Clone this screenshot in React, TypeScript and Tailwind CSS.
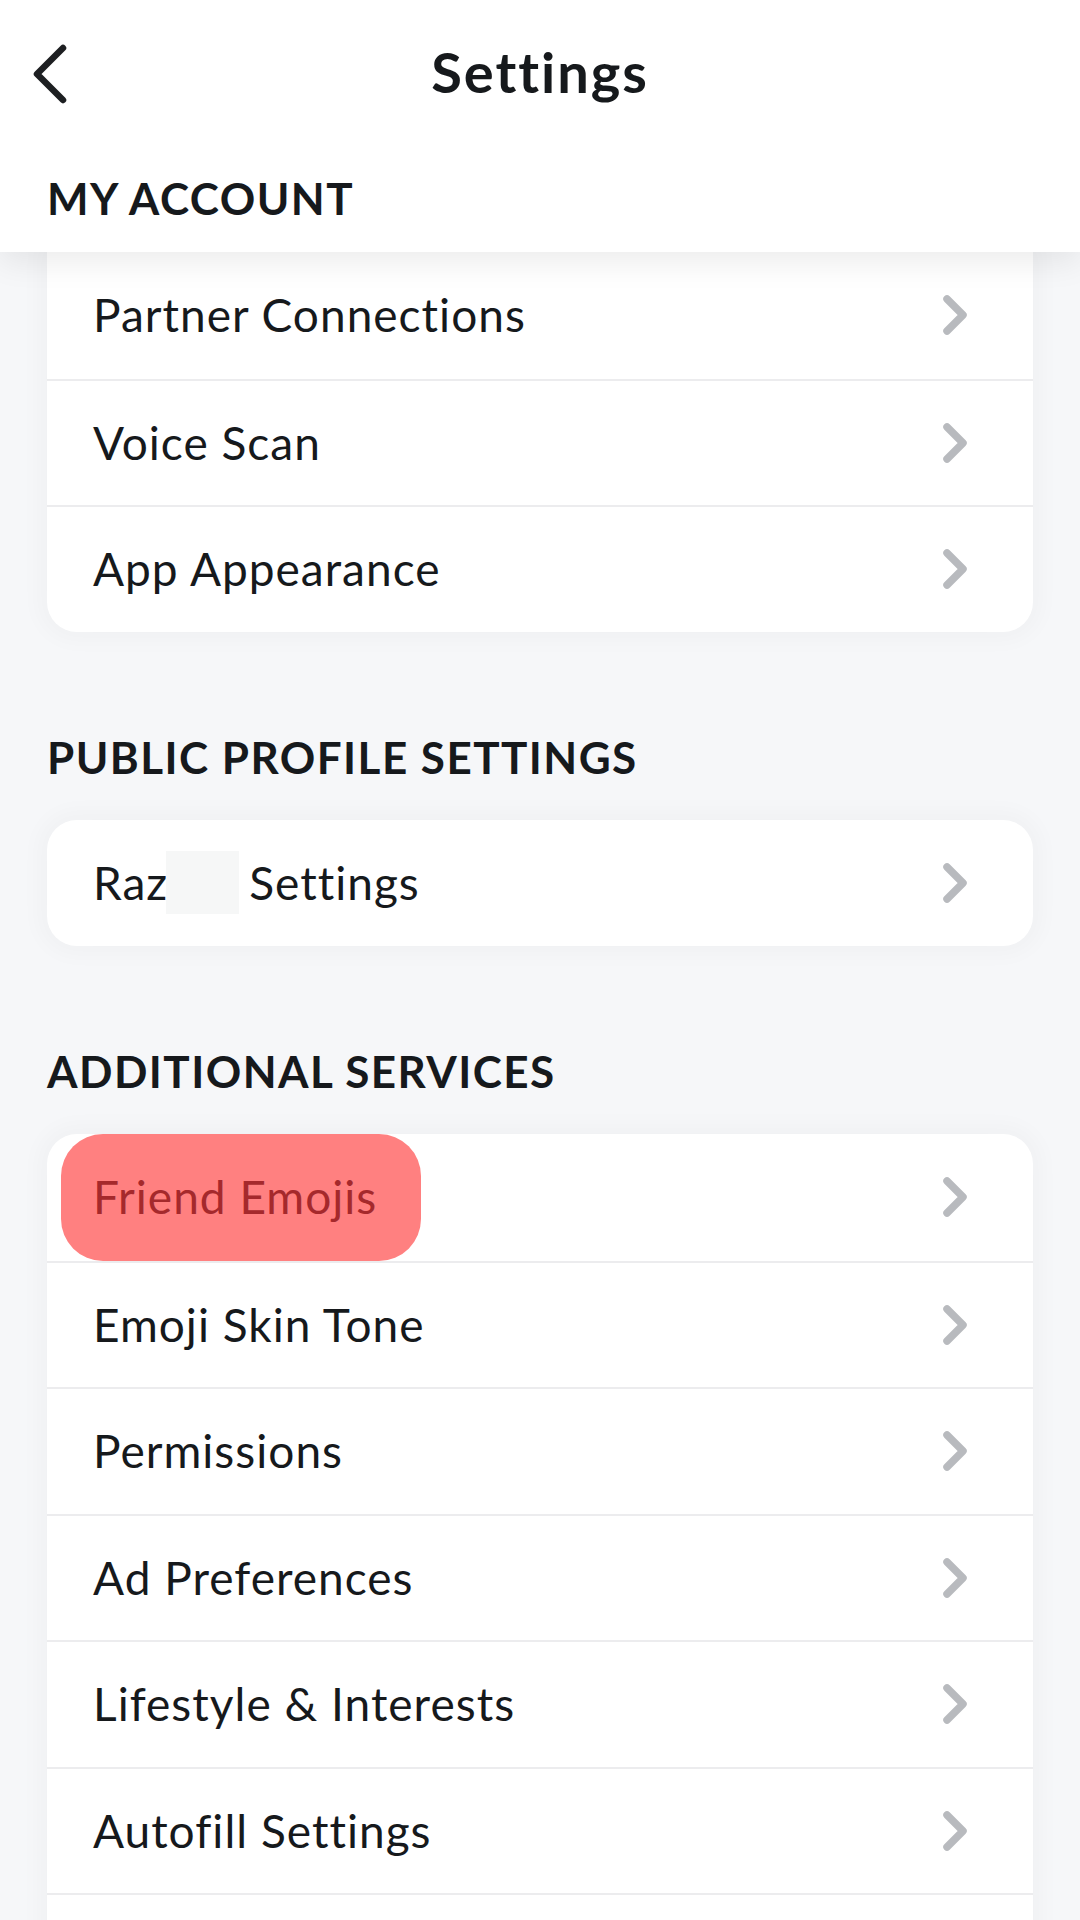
import React from 'react'

const Chevron = () => (
  <svg width="28" height="44" viewBox="0 0 28 44" className="shrink-0">
    <path d="M6 6 L22 22 L6 38" fill="none" stroke="#b8babe" strokeWidth="7.5" strokeLinecap="round" strokeLinejoin="round" />
  </svg>
)

const BackIcon = () => (
  <svg width="40" height="64" viewBox="0 0 40 64">
    <path d="M33 6 L7 32 L33 58" fill="none" stroke="#1d1f22" strokeWidth="6.5" strokeLinecap="round" strokeLinejoin="round" />
  </svg>
)

interface RowProps {
  label?: React.ReactNode
  first?: boolean
  highlight?: boolean
}

const Row: React.FC<RowProps> = ({ label, first, highlight }) => (
  <div
    className={`relative h-[126.5px] flex items-center justify-between pl-[46px] pr-[64px] ${
      first ? '' : 'border-t-2 border-[#ececee]'
    }`}
  >
    {highlight ? <div className="absolute left-[14px] top-0 bottom-0 w-[360px] rounded-[42px] bg-[#ff8080]" /> : null}
    <span
      className={`relative text-[46px] leading-none tracking-[0.022em] ${
        highlight ? 'text-[#a5292c]' : 'text-[#16191c]'
      }`}
    >
      {label}
    </span>
    {label !== undefined ? <Chevron /> : null}
  </div>
)

const Card: React.FC<{ children: React.ReactNode; className?: string }> = ({ children, className }) => (
  <div
    className={`bg-white overflow-hidden shadow-[0_0_20px_10px_rgba(20,30,50,0.025)] ${className ?? 'rounded-[30px]'}`}
  >
    {children}
  </div>
)

const SectionTitle: React.FC<{ children: React.ReactNode; className?: string }> = ({ children, className }) => (
  <div
    className={`flex items-center px-[47px] text-[44px] font-bold leading-none tracking-[0.033em] text-[#16191c] ${
      className ?? 'h-[126px]'
    }`}
  >
    {children}
  </div>
)

export default function App() {
  return (
    <div className="relative w-[1080px] h-[1920px] overflow-hidden bg-[#f6f7f9] font-['Lato',sans-serif]">
      <header className="relative z-10 bg-white shadow-[0_10px_30px_rgba(0,0,0,0.08)]">
        <div className="relative h-[144px] flex items-center justify-center">
          <button className="absolute left-[30px] top-[42px]">
            <BackIcon />
          </button>
          <h1 className="text-[56px] font-bold leading-none tracking-[0.035em] text-[#16191c]">Settings</h1>
        </div>
        <SectionTitle className="h-[108px]">MY ACCOUNT</SectionTitle>
      </header>

      <main className="px-[47px]">
        <Card className="rounded-b-[30px]">
          <Row first label="Partner Connections" />
          <Row label="Voice Scan" />
          <Row label="App Appearance" />
        </Card>

        <SectionTitle className="h-[126px] mt-[62px] -mx-[47px]">PUBLIC PROFILE SETTINGS</SectionTitle>
        <Card>
          <Row
            first
            label={
              <span className="flex items-center">
                Raz
                <span className="inline-block w-[73px] h-[63px] -ml-[2px] mr-[10px] bg-[#f6f7f7]" />
                Settings
              </span>
            }
          />
        </Card>

        <SectionTitle className="h-[126px] mt-[62px] -mx-[47px]">ADDITIONAL SERVICES</SectionTitle>
        <Card>
          <Row first highlight label="Friend Emojis" />
          <Row label="Emoji Skin Tone" />
          <Row label="Permissions" />
          <Row label="Ad Preferences" />
          <Row label="Lifestyle & Interests" />
          <Row label="Autofill Settings" />
          <Row />
        </Card>
      </main>
    </div>
  )
}
